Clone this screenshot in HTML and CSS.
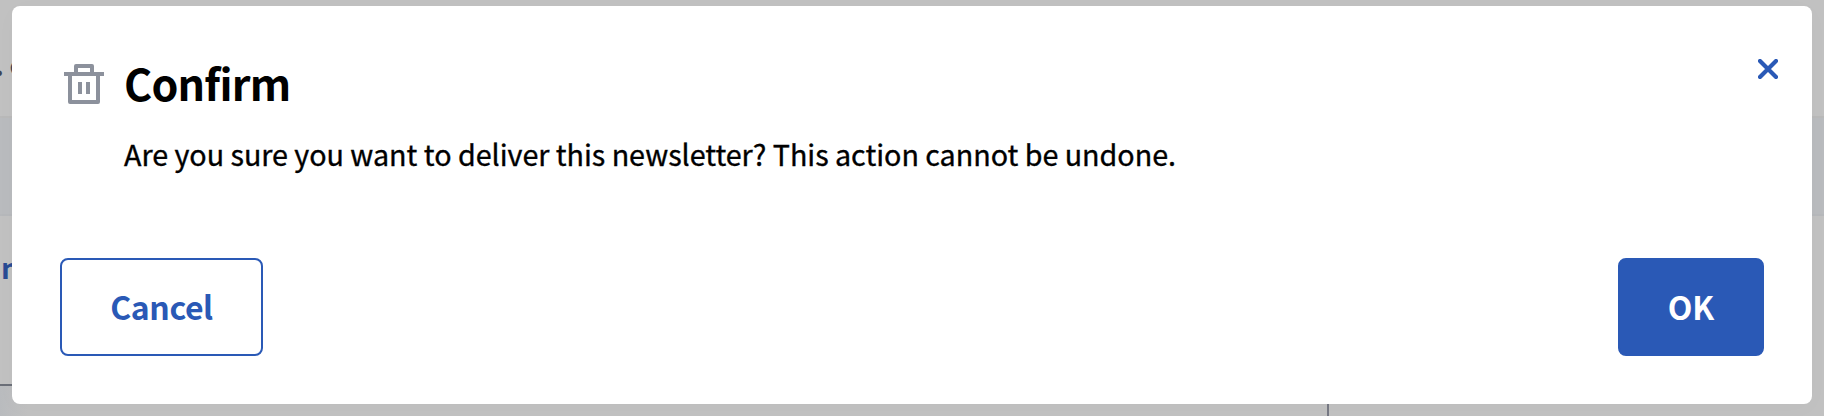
FILE: index.html
```html
<!DOCTYPE html>
<html lang="en">
<head>
<meta charset="utf-8">
<title>Confirm</title>
<link rel="stylesheet" href="styles.css">
</head>
<body>
<div class="page">
  <div class="page-header"><span>. c</span></div>
  <div class="page-band"></div>
  <div class="page-row"><span>n</span></div>
  <div class="page-footer"></div>
</div>
<section class="modal" role="dialog" aria-labelledby="title">
  <header class="modal-header">
    <svg class="trash" viewBox="0 0 40 40" aria-hidden="true">
      <path d="M12 8V2h16v6M0 10h40M6 10v28h28V10M16 18v12M24 18v12" fill="none" stroke="currentColor" stroke-width="4" stroke-linejoin="round"/>
    </svg>
    <div class="copy">
      <h1 id="title">Confirm</h1>
      <p>Are you sure you want to deliver this newsletter? This action cannot be undone.</p>
    </div>
    <button class="close" aria-label="Close">
      <svg viewBox="0 0 20 20"><path d="M2 2l16 16M18 2L2 18" fill="none" stroke="currentColor" stroke-width="4.2" stroke-linecap="round"/></svg>
    </button>
  </header>
  <footer class="actions">
    <button class="button cancel">Cancel</button>
    <button class="button ok">OK</button>
  </footer>
</section>
</body>
</html>
```
FILE: styles.css
```css
* { box-sizing: border-box; }
body {
  margin: 0;
  height: 416px;
  overflow: hidden;
  position: relative;
  font-family: "Noto Sans CJK SC", "Noto Sans", sans-serif;
  color: #000;
}
.page {
  height: 416px;
  background: #c1c1c1;
  display: flex;
  flex-direction: column;
  font-weight: 700;
  white-space: nowrap;
}
.page-header {
  height: 118px;
  border-bottom: 2px solid #b9b9b9;
  padding-top: 41px;
  font-size: 29px;
  line-height: 44px;
  word-spacing: -1px;
  color: #3d4454;
}
.page-header span { margin-left: -5.5px; }
.page-band {
  height: 98px;
  background: #b9bbbe;
  border-bottom: 2px solid #b6b8bb;
}
.page-row {
  width: 1329px;
  height: 170px;
  padding: 28px 0 0 1px;
  border-bottom: 2px solid #6b6f78;
  font-size: 29px;
  line-height: 44px;
  color: #294b94;
}
.page-footer {
  width: 1329px;
  height: 30px;
  border-right: 2px solid #777984;
  background: linear-gradient(90deg, #b9bbbe, #c1c1c1 28px);
}
.modal {
  position: absolute;
  left: 12px;
  top: 6px;
  width: 1800px;
  height: 398px;
  padding: 48px;
  border-radius: 8px;
  background: #fff;
  box-shadow: 0 4px 24px rgba(0, 0, 0, 0.02);
  display: flex;
  flex-direction: column;
  justify-content: space-between;
}
.modal-header { display: flex; align-items: flex-start; }
.trash { width: 40px; height: 40px; margin: 10px 20px 0 4px; color: #8c919c; }
.copy { flex: 1; }
h1 {
  margin: 0;
  font-size: 43px;
  line-height: 56px;
  font-weight: 700;
  letter-spacing: -0.8px;
}
p {
  margin: 22px 0 0;
  font-size: 28.7px;
  line-height: 44px;
  letter-spacing: -0.02px;
  -webkit-text-stroke: 0.35px #000;
}
button {
  font-family: inherit;
  border: 0;
  padding: 0;
  background: none;
}
.close { width: 20px; height: 20px; margin: 5px -14px 0 0; color: #2a59b6; }
.close svg { display: block; }
.actions { display: flex; justify-content: space-between; }
.button {
  height: 98px;
  border: 2px solid #2a59b6;
  border-radius: 8px;
  padding-bottom: 2px;
  font-size: 32px;
  font-weight: 700;
}
.cancel { width: 203px; color: #2a59b6; letter-spacing: -0.4px; }
.ok { width: 146px; color: #fff; background: #2a59b6; }
```
